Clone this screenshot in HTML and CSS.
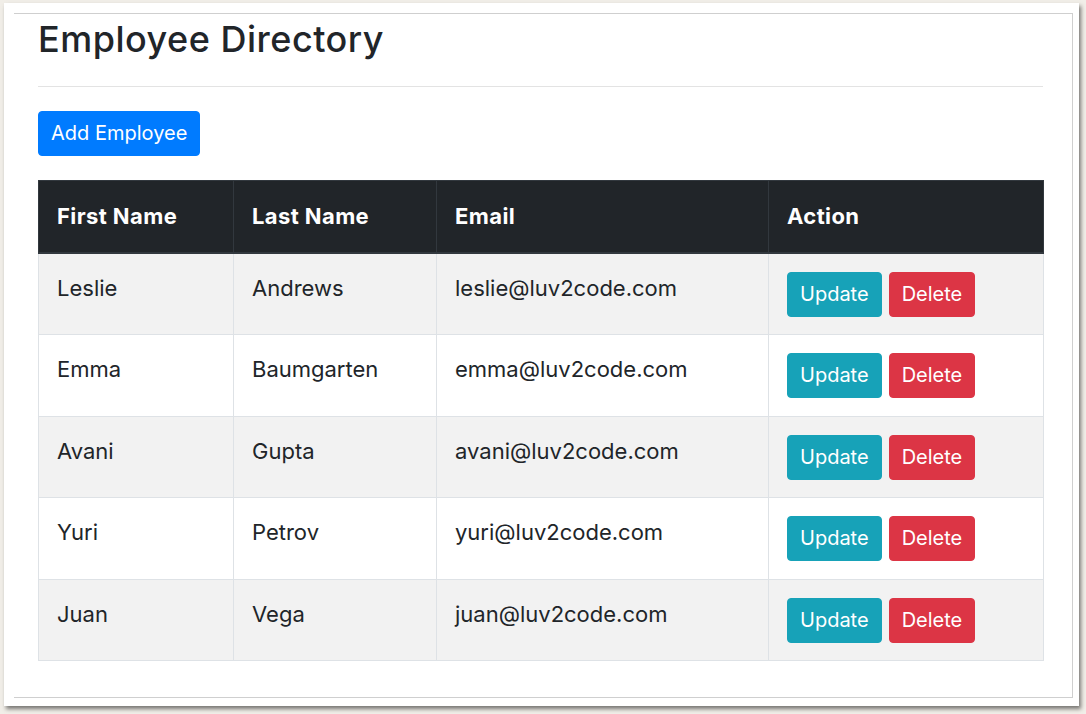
FILE: index.html
```html
<!DOCTYPE html>
<html lang="en">
<head>
<meta charset="utf-8">
<title>Employee Directory</title>
<link rel="stylesheet" href="styles.css">
</head>
<body>
<div class="sheet">
  <div class="panel">
    <h1 class="title">Employee Directory</h1>
    <hr class="rule">
    <button class="btn btn-primary">Add Employee</button>
    <table class="table">
      <colgroup>
        <col class="c1"><col class="c2"><col class="c3"><col class="c4">
      </colgroup>
      <thead>
        <tr><th>First Name</th><th>Last Name</th><th>Email</th><th>Action</th></tr>
      </thead>
      <tbody>
        <tr><td>Leslie</td><td>Andrews</td><td>leslie@luv2code.com</td><td><div class="actions"><button class="btn btn-info">Update</button><button class="btn btn-danger">Delete</button></div></td></tr>
        <tr><td>Emma</td><td>Baumgarten</td><td>emma@luv2code.com</td><td><div class="actions"><button class="btn btn-info">Update</button><button class="btn btn-danger">Delete</button></div></td></tr>
        <tr><td>Avani</td><td>Gupta</td><td>avani@luv2code.com</td><td><div class="actions"><button class="btn btn-info">Update</button><button class="btn btn-danger">Delete</button></div></td></tr>
        <tr><td>Yuri</td><td>Petrov</td><td>yuri@luv2code.com</td><td><div class="actions"><button class="btn btn-info">Update</button><button class="btn btn-danger">Delete</button></div></td></tr>
        <tr><td>Juan</td><td>Vega</td><td>juan@luv2code.com</td><td><div class="actions"><button class="btn btn-info">Update</button><button class="btn btn-danger">Delete</button></div></td></tr>
      </tbody>
    </table>
  </div>
</div>
</body>
</html>
```
FILE: styles.css
```css
html, body {
  margin: 0;
  padding: 0;
}
body {
  background: #f1eee8;
  font-family: Inter, "Noto Sans", sans-serif;
  color: #212529;
  height: 714px;
  overflow: hidden;
}
.sheet {
  margin: 3px 7px 0 4px;
  height: 703px;
  background: #ffffff;
  box-shadow: 2px 3px 4px rgba(0, 0, 0, 0.5);
  padding: 10px 6px 0 10px;
  box-sizing: border-box;
}
.panel {
  height: 685px;
  box-sizing: border-box;
  border-top: 1px solid #cfcfcf;
  border-right: 1px solid #cfcfcf;
  border-bottom: 1px solid #cfcfcf;
  padding: 0 29px 0 24px;
}
.title {
  margin: 5px 0 0 0;
  font-size: 36px;
  font-weight: 500;
  line-height: 41px;
  color: #212529;
  letter-spacing: 0.5px;
}
.rule {
  margin: 26px 0 0 0;
  border: 0;
  border-top: 1px solid #e3e3e3;
  height: 0;
}
.btn {
  display: inline-block;
  font-family: inherit;
  font-size: 20px;
  font-weight: 400;
  line-height: 29px;
  padding: 7px 12px;
  border: 1px solid transparent;
  border-radius: 4px;
  color: #ffffff;
  cursor: pointer;
}
.btn-primary {
  background: #007bff;
  border-color: #007bff;
  margin-top: 24px;
}
.btn-info {
  background: #17a2b8;
  border-color: #17a2b8;
}
.btn-danger {
  background: #dc3545;
  border-color: #dc3545;
}
.table {
  margin-top: 24px;
  width: 1005px;
  border-collapse: collapse;
  table-layout: fixed;
  font-size: 22px;
}
.c1 { width: 195px; }
.c2 { width: 203px; }
.c3 { width: 332px; }
.c4 { width: 275px; }
.table th {
  background: #212529;
  color: #ffffff;
  font-weight: 700;
  letter-spacing: 0.4px;
  text-align: left;
  padding: 19px 18px 18.5px;
  line-height: 33px;
  border: 1px solid #32383e;
  border-bottom-width: 2px;
}
.table td {
  padding: 18px 18px 17.6px;
  line-height: 33px;
  vertical-align: top;
  border: 1px solid #dee2e6;
}
.table tbody tr:nth-child(odd) td {
  background: #f2f2f2;
}
.actions {
  display: flex;
  gap: 7px;
}
```
